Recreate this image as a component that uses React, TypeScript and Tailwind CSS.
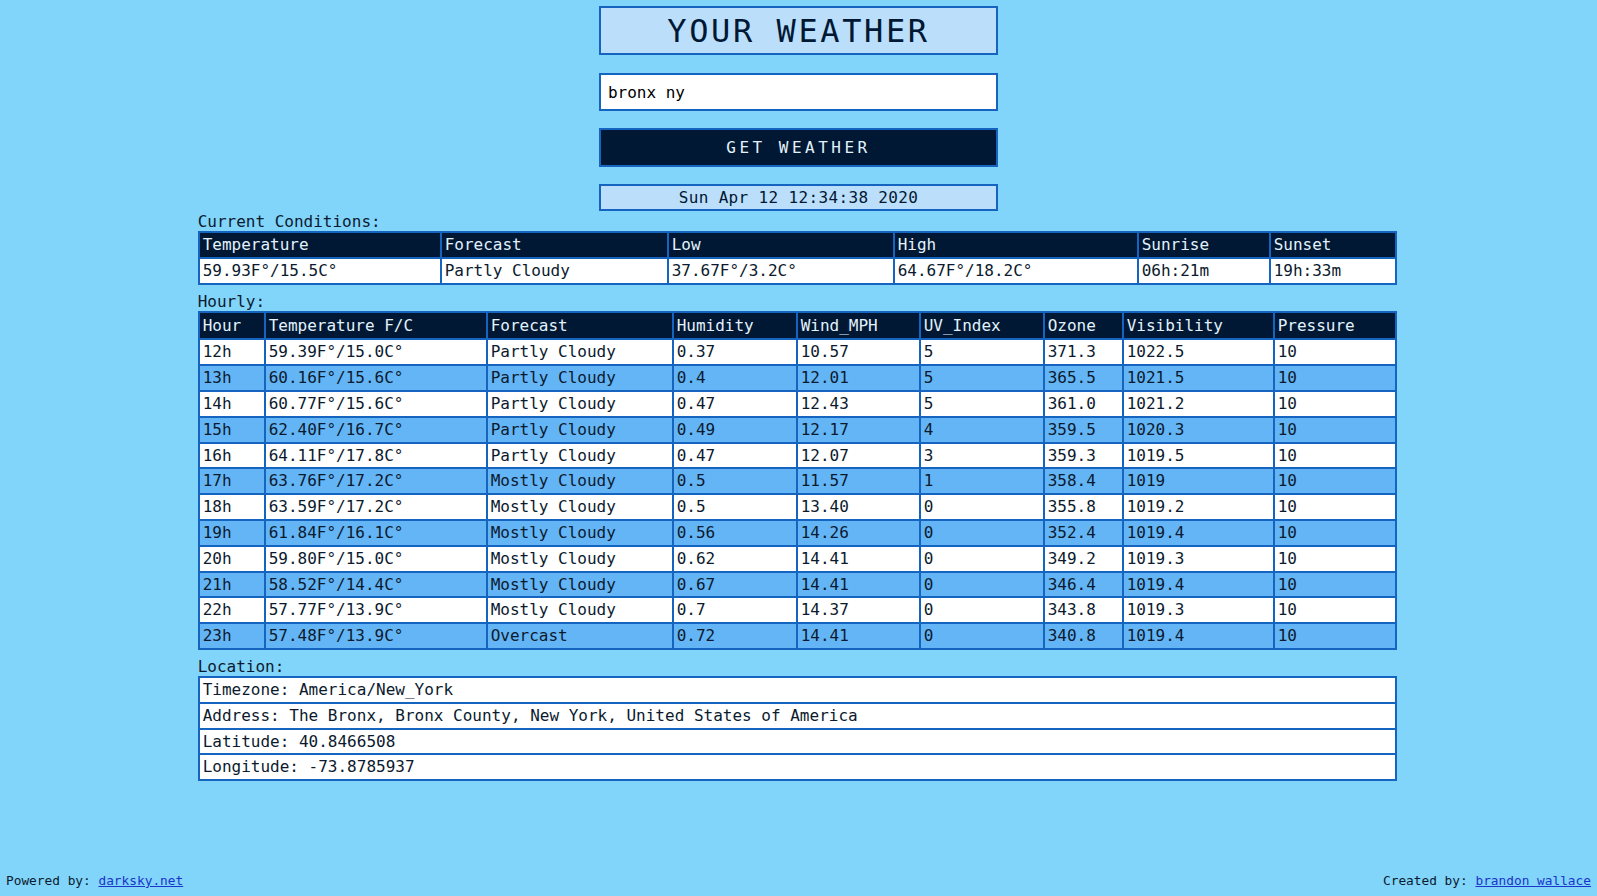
import React from "react"

const current = {
  temperature: "59.93F°/15.5C°",
  forecast: "Partly Cloudy",
  low: "37.67F°/3.2C°",
  high: "64.67F°/18.2C°",
  sunrise: "06h:21m",
  sunset: "19h:33m",
}

const hourly = [
  ["12h", "59.39F°/15.0C°", "Partly Cloudy", "0.37", "10.57", "5", "371.3", "1022.5", "10"],
  ["13h", "60.16F°/15.6C°", "Partly Cloudy", "0.4", "12.01", "5", "365.5", "1021.5", "10"],
  ["14h", "60.77F°/15.6C°", "Partly Cloudy", "0.47", "12.43", "5", "361.0", "1021.2", "10"],
  ["15h", "62.40F°/16.7C°", "Partly Cloudy", "0.49", "12.17", "4", "359.5", "1020.3", "10"],
  ["16h", "64.11F°/17.8C°", "Partly Cloudy", "0.47", "12.07", "3", "359.3", "1019.5", "10"],
  ["17h", "63.76F°/17.2C°", "Mostly Cloudy", "0.5", "11.57", "1", "358.4", "1019", "10"],
  ["18h", "63.59F°/17.2C°", "Mostly Cloudy", "0.5", "13.40", "0", "355.8", "1019.2", "10"],
  ["19h", "61.84F°/16.1C°", "Mostly Cloudy", "0.56", "14.26", "0", "352.4", "1019.4", "10"],
  ["20h", "59.80F°/15.0C°", "Mostly Cloudy", "0.62", "14.41", "0", "349.2", "1019.3", "10"],
  ["21h", "58.52F°/14.4C°", "Mostly Cloudy", "0.67", "14.41", "0", "346.4", "1019.4", "10"],
  ["22h", "57.77F°/13.9C°", "Mostly Cloudy", "0.7", "14.37", "0", "343.8", "1019.3", "10"],
  ["23h", "57.48F°/13.9C°", "Overcast", "0.72", "14.41", "0", "340.8", "1019.4", "10"],
]

const hourlyHeaders = [
  "Hour",
  "Temperature F/C",
  "Forecast",
  "Humidity",
  "Wind_MPH",
  "UV_Index",
  "Ozone",
  "Visibility",
  "Pressure",
]

const location = [
  "Timezone: America/New_York",
  "Address: The Bronx, Bronx County, New York, United States of America",
  "Latitude: 40.8466508",
  "Longitude: -73.8785937",
]

const cell = "border-2 border-[#1565c0] px-[3px] py-0 text-left font-normal whitespace-nowrap"
const td = cell + " leading-[23.8px]"

export default function App() {
  return (
    <div className="flex min-h-screen flex-col bg-[#81d4fa] font-['DejaVu_Sans_Mono',monospace] text-[16px] text-[#0b1a2e]">
      <main className="flex flex-col items-center">
        {/* header controls */}
        <div className="mt-[6px] flex h-[49px] w-1/4 items-center justify-center border-2 border-[#1565c0] bg-[#bbdefb]">
          <h1 className="text-[32px] leading-none tracking-[2.6px] text-[#001833]">YOUR WEATHER</h1>
        </div>
        <input
          className="mt-[18px] h-[38px] w-1/4 border-2 border-[#1565c0] bg-white px-[7px] text-[16px] text-black outline-none"
          defaultValue="bronx ny"
        />
        <button className="mt-[17px] h-[39px] w-1/4 border-2 border-[#1565c0] bg-[#001833] pt-[1px] text-[16px] tracking-[3.5px] text-[#e3f2fd]">
          GET WEATHER
        </button>
        <div className="mt-[17px] flex h-[27px] w-1/4 items-center justify-center border-2 border-[#1565c0] bg-[#bbdefb] tracking-[0.35px] text-[#001833]">
          Sun Apr 12 12:34:38 2020
        </div>

        <section className="mr-[2px] w-[calc(75%+2px)]">
          <div className="h-[20px] leading-[22px]">Current Conditions:</div>
          <table className="w-full table-fixed border-collapse border-2 border-[#1565c0]">
            <colgroup>
              <col className="w-[242px]" />
              <col className="w-[227px]" />
              <col className="w-[226px]" />
              <col className="w-[244px]" />
              <col className="w-[132px]" />
              <col />
            </colgroup>
            <thead>
              <tr className="bg-[#001833] text-[#e3f2fd]">
                <th className={td}>Temperature</th>
                <th className={td}>Forecast</th>
                <th className={td}>Low</th>
                <th className={td}>High</th>
                <th className={td}>Sunrise</th>
                <th className={td}>Sunset</th>
              </tr>
            </thead>
            <tbody>
              <tr className="bg-white">
                <td className={td}>{current.temperature}</td>
                <td className={td}>{current.forecast}</td>
                <td className={td}>{current.low}</td>
                <td className={td}>{current.high}</td>
                <td className={td}>{current.sunrise}</td>
                <td className={td}>{current.sunset}</td>
              </tr>
            </tbody>
          </table>

          <div className="mt-[4px] h-[22px] leading-[26px]">Hourly:</div>
          <table className="w-full table-fixed border-collapse border-2 border-[#1565c0]">
            <colgroup>
              <col className="w-[66px]" />
              <col className="w-[222px]" />
              <col className="w-[186px]" />
              <col className="w-[124px]" />
              <col className="w-[123px]" />
              <col className="w-[124px]" />
              <col className="w-[79px]" />
              <col className="w-[151px]" />
              <col />
            </colgroup>
            <thead>
              <tr className="bg-[#001833] text-[#e3f2fd]">
                {hourlyHeaders.map((h) => (
                  <th key={h} className={cell + " leading-[25.8px]"}>
                    {h}
                  </th>
                ))}
              </tr>
            </thead>
            <tbody>
              {hourly.map((row, i) => (
                <tr key={row[0]} className={i % 2 === 0 ? "bg-white" : "bg-[#64b5f6]"}>
                  {row.map((value, j) => (
                    <td key={j} className={td}>
                      {value}
                    </td>
                  ))}
                </tr>
              ))}
            </tbody>
          </table>

          <div className="mt-[6px] h-[20px] leading-[22px]">Location:</div>
          <table className="w-full border-collapse border-2 border-[#1565c0]">
            <tbody>
              {location.map((line) => (
                <tr key={line} className="bg-white">
                  <td className={td}>{line}</td>
                </tr>
              ))}
            </tbody>
          </table>
        </section>
      </main>

      <footer className="mt-auto flex justify-between px-[6px] pb-[8px] text-[12.8px] leading-[15px] text-[#0b1a2e]">
        <div>
          Powered by: <a href="#" className="text-[#1a35c9] underline">darksky.net</a>
        </div>
        <div>
          Created by: <a href="#" className="text-[#1a35c9] underline">brandon wallace</a>
        </div>
      </footer>
    </div>
  )
}
